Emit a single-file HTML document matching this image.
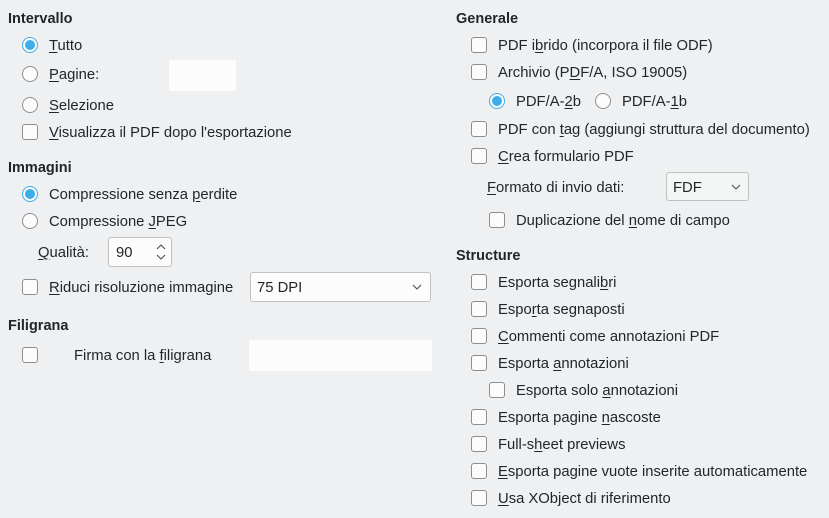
<!DOCTYPE html>
<html><head><meta charset="utf-8"><style>
html,body{margin:0;padding:0}
body{width:829px;height:518px;background:#eff0f1;position:relative;overflow:hidden;font-family:"Liberation Sans","DejaVu Sans",sans-serif;font-size:14.8px;color:#232629}
.t{position:absolute;height:20px;line-height:20px;white-space:nowrap;margin-top:1px}
.h{font-weight:bold;font-size:14.5px}
.cb{position:absolute;width:14px;height:14px;border:1px solid #8c8e90;border-radius:3px;background:#fcfcfc}
.rb{position:absolute;width:14px;height:14px;border:1px solid #8c8e90;border-radius:50%;background:#fcfcfc}
.rb.on{border-color:#3daee9;background:#fcfcfc}
.rb.on::after{content:"";position:absolute;left:2px;top:2px;width:10px;height:10px;border-radius:50%;background:#3daee9}
.box{position:absolute;background:#fcfcfc}
.fld{position:absolute;background:#fcfcfc;border:1px solid #bfc1c3;border-radius:3px;box-sizing:border-box}
u{text-decoration:underline;text-underline-offset:2px}
</style></head><body>
<div class="t h" style="left:8px;top:8px">Intervallo</div>
<div class="rb on" style="left:22px;top:37px"></div><div class="t" style="left:49px;top:35px"><u>T</u>utto</div>
<div class="rb" style="left:22px;top:66px"></div><div class="t" style="left:49px;top:64px"><u>P</u>agine:</div>
<div class="box" style="left:169px;top:60px;width:67px;height:31px"></div>
<div class="rb" style="left:22px;top:97px"></div><div class="t" style="left:49px;top:95px"><u>S</u>elezione</div>
<div class="cb" style="left:22px;top:124px"></div><div class="t" style="left:49px;top:122px"><u>V</u>isualizza il PDF dopo l'esportazione</div>

<div class="t h" style="left:8px;top:157px">Immagini</div>
<div class="rb on" style="left:22px;top:186px"></div><div class="t" style="left:49px;top:184px">Compressione senza <u>p</u>erdite</div>
<div class="rb" style="left:22px;top:213px"></div><div class="t" style="left:49px;top:211px">Compressione <u>J</u>PEG</div>
<div class="t" style="left:38px;top:242px"><u>Q</u>ualità:</div>
<div class="fld" style="left:108px;top:237px;width:64px;height:30px"></div>
<div class="t" style="left:116px;top:242px">90</div>
<svg style="position:absolute;left:155px;top:242px" width="12" height="20" viewBox="0 0 12 20"><path d="M2 7L6 3L10 7M2 13L6 17L10 13" fill="none" stroke="#4d4f51" stroke-width="1.1"/></svg>
<div class="cb" style="left:22px;top:279px"></div><div class="t" style="left:49px;top:277px"><u>R</u>iduci risoluzione immagine</div>
<div class="fld" style="left:250px;top:272px;width:181px;height:30px"></div>
<div class="t" style="left:257px;top:277px">75 DPI</div>
<svg style="position:absolute;left:412px;top:283px" width="10" height="8" viewBox="0 0 10 8"><path d="M1 2L5 6L9 2" fill="none" stroke="#4d4f51" stroke-width="1.1"/></svg>

<div class="t h" style="left:8px;top:315px">Filigrana</div>
<div class="cb" style="left:22px;top:347px"></div><div class="t" style="left:74px;top:345px">Firma con la <u>f</u>iligrana</div>
<div class="box" style="left:249px;top:340px;width:183px;height:31px"></div>

<div class="t h" style="left:456px;top:8px">Generale</div>
<div class="cb" style="left:471px;top:37px"></div><div class="t" style="left:498px;top:35px">PDF i<u>b</u>rido (incorpora il file ODF)</div>
<div class="cb" style="left:471px;top:64px"></div><div class="t" style="left:498px;top:62px">Archivio (P<u>D</u>F/A, ISO 19005)</div>
<div class="rb on" style="left:489px;top:93px"></div><div class="t" style="left:516px;top:91px">PDF/A-<u>2</u>b</div>
<div class="rb" style="left:595px;top:93px"></div><div class="t" style="left:622px;top:91px">PDF/A-<u>1</u>b</div>
<div class="cb" style="left:471px;top:121px"></div><div class="t" style="left:498px;top:119px">PDF con <u>t</u>ag (aggiungi struttura del documento)</div>
<div class="cb" style="left:471px;top:148px"></div><div class="t" style="left:498px;top:146px"><u>C</u>rea formulario PDF</div>
<div class="t" style="left:487px;top:177px"><u>F</u>ormato di invio dati:</div>
<div class="fld" style="left:666px;top:172px;width:83px;height:29px;background:#f4f5f5"></div>
<div class="t" style="left:673px;top:177px">FDF</div>
<svg style="position:absolute;left:731px;top:183px" width="10" height="8" viewBox="0 0 10 8"><path d="M1 2L5 6L9 2" fill="none" stroke="#4d4f51" stroke-width="1.1"/></svg>
<div class="cb" style="left:489px;top:212px"></div><div class="t" style="left:516px;top:210px">Duplicazione del <u>n</u>ome di campo</div>

<div class="t h" style="left:456px;top:245px">Structure</div>
<div class="cb" style="left:471px;top:274px"></div><div class="t" style="left:498px;top:272px">Esporta segnali<u>b</u>ri</div>
<div class="cb" style="left:471px;top:301px"></div><div class="t" style="left:498px;top:299px">Espo<u>r</u>ta segnaposti</div>
<div class="cb" style="left:471px;top:328px"></div><div class="t" style="left:498px;top:326px"><u>C</u>ommenti come annotazioni PDF</div>
<div class="cb" style="left:471px;top:355px"></div><div class="t" style="left:498px;top:353px">Esporta <u>a</u>nnotazioni</div>
<div class="cb" style="left:489px;top:382px"></div><div class="t" style="left:516px;top:380px">Esporta solo <u>a</u>nnotazioni</div>
<div class="cb" style="left:471px;top:409px"></div><div class="t" style="left:498px;top:407px">Esporta pagine <u>n</u>ascoste</div>
<div class="cb" style="left:471px;top:436px"></div><div class="t" style="left:498px;top:434px">Full-s<u>h</u>eet previews</div>
<div class="cb" style="left:471px;top:463px"></div><div class="t" style="left:498px;top:461px"><u>E</u>sporta pagine vuote inserite automaticamente</div>
<div class="cb" style="left:471px;top:490px"></div><div class="t" style="left:498px;top:488px"><u>U</u>sa XObject di riferimento</div>
</body></html>
